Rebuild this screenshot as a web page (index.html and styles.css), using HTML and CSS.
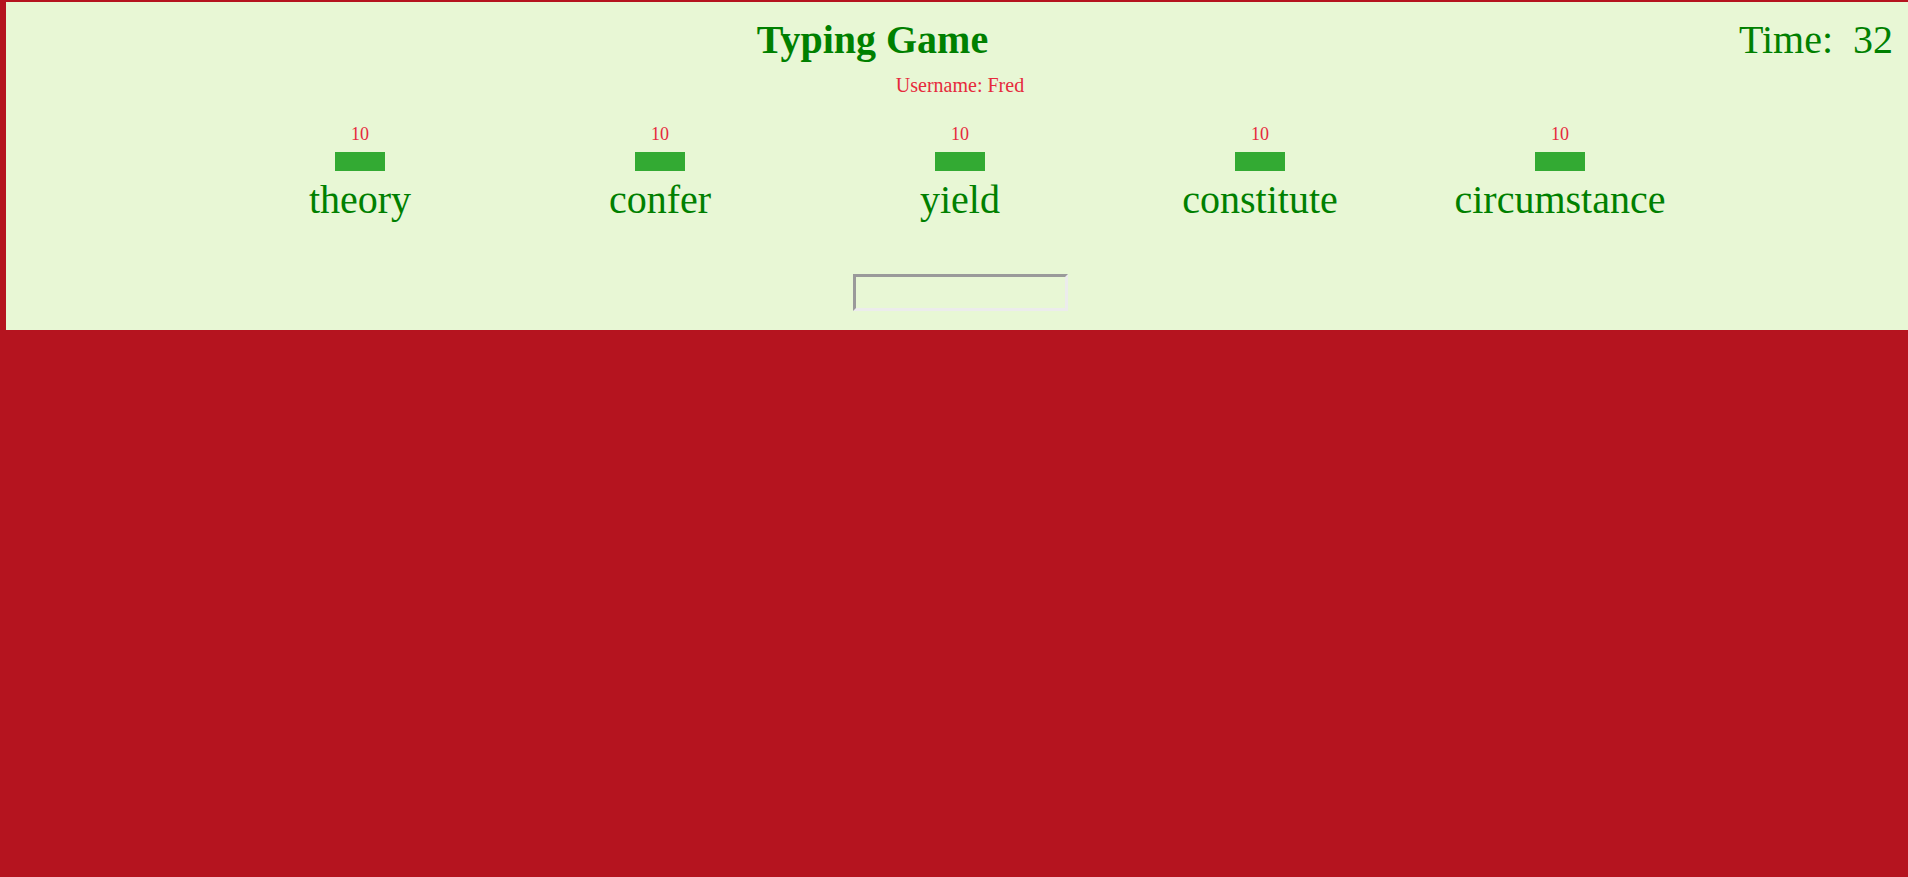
FILE: index.html
```html
<!DOCTYPE html>
<html>
<head>
<meta charset="utf-8">
<title>Typing Game</title>
<link rel="stylesheet" href="styles.css">
</head>
<body>
<div class="panel">
  <div class="header">
    <div class="timer"><span class="timer-label">Time:</span><span class="timer-value">32</span></div>
    <h1 class="title">Typing Game</h1>
  </div>
  <div class="username">Username: Fred</div>
  <div class="words">
    <div class="word">
      <div class="count">10</div>
      <div class="bar"></div>
      <div class="text">theory</div>
    </div>
    <div class="word">
      <div class="count">10</div>
      <div class="bar"></div>
      <div class="text">confer</div>
    </div>
    <div class="word">
      <div class="count">10</div>
      <div class="bar"></div>
      <div class="text">yield</div>
    </div>
    <div class="word">
      <div class="count">10</div>
      <div class="bar"></div>
      <div class="text">constitute</div>
    </div>
    <div class="word">
      <div class="count">10</div>
      <div class="bar"></div>
      <div class="text">circumstance</div>
    </div>
  </div>
  <div class="entry">
    <input class="typing-input" type="text">
  </div>
</div>
</body>
</html>
```

FILE: styles.css
```css
html, body {
  margin: 0;
  padding: 0;
  overflow: hidden;
  background: #b5141f;
  font-family: "Liberation Serif", "Times New Roman", serif;
}

body {
  height: 877px;
}

.panel {
  margin: 2px 0 0 6px;
  width: 1908px;
  background: #e8f7d5;
  padding-top: 15px;
  padding-bottom: 19px;
}

.header {
  height: 46px;
}

.timer {
  float: right;
  margin-right: 21px;
  font-size: 40px;
  line-height: 46px;
  color: #008000;
}

.timer-value {
  margin-left: 20px;
}

.title {
  margin: 0;
  font-size: 40px;
  line-height: 46px;
  font-weight: bold;
  color: #008000;
  text-align: center;
}

.username {
  margin-top: 10px;
  font-size: 20px;
  line-height: 24px;
  color: #e62a3c;
  text-align: center;
}

.words {
  margin-top: 27px;
  display: flex;
  justify-content: center;
}

.word {
  width: 300px;
  display: flex;
  flex-direction: column;
  align-items: center;
}

.count {
  font-size: 18px;
  line-height: 20px;
  color: #e62a3c;
}

.bar {
  margin-top: 8px;
  width: 50px;
  height: 19px;
  background: #33aa33;
}

.text {
  margin-top: 6px;
  font-size: 40px;
  line-height: 46px;
  color: #008000;
}

.entry {
  margin-top: 51px;
  display: flex;
  justify-content: center;
}

.typing-input {
  box-sizing: border-box;
  width: 215px;
  height: 37px;
  margin: 0;
  padding: 1px 4px;
  background: transparent;
  border-style: solid;
  border-width: 3px;
  border-color: #9a9a9a #ececec #ececec #9a9a9a;
  font-family: "Liberation Serif", serif;
  font-size: 24px;
  color: #008000;
  outline: none;
}
```
